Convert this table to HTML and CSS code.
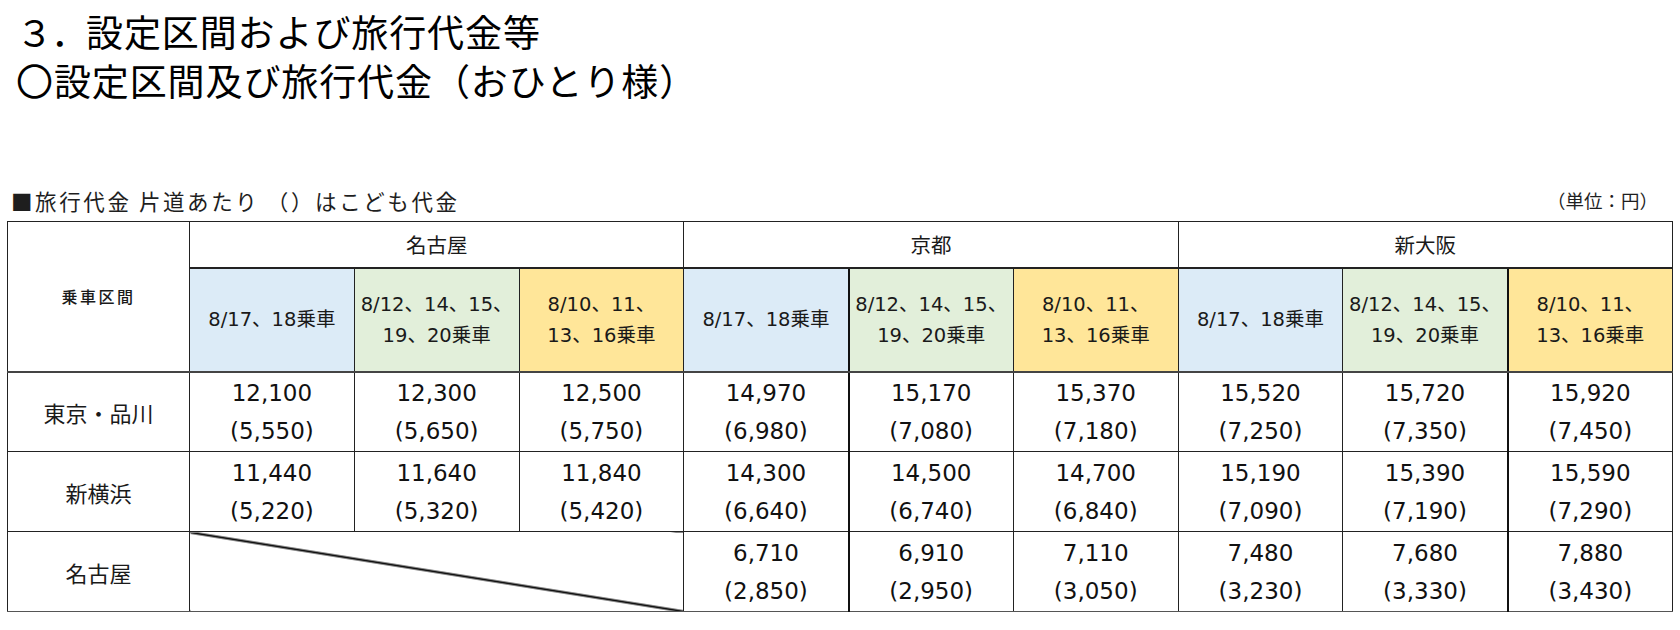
FILE: index.html
```html
<!DOCTYPE html>
<html lang="ja">
<head>
<meta charset="utf-8">
<title>設定区間および旅行代金等</title>
<link rel="stylesheet" href="styles.css">
</head>
<body>
<div class="page">
  <div class="titles">
    <div class="title"><span class="num">３．</span>設定区間および旅行代金等</div>
    <div class="title">〇設定区間及び旅行代金（おひとり様）</div>
  </div>
  <div class="caption">
    <span class="note">■旅行代金 片道あたり （）はこども代金</span>
    <span class="unit">（単位：円）</span>
  </div>
  <table class="fares">
    <colgroup>
      <col class="c-label">
      <col><col><col><col><col><col><col><col><col>
    </colgroup>
    <tr class="h1">
      <th rowspan="2" class="sect">乗車区間</th>
      <th colspan="3">名古屋</th>
      <th colspan="3">京都</th>
      <th colspan="3">新大阪</th>
    </tr>
    <tr class="h2">
      <th class="blue">8/17、18乗車</th>
      <th class="green">8/12、14、15、<br>19、20乗車</th>
      <th class="yellow">8/10、11、<br>13、16乗車</th>
      <th class="blue">8/17、18乗車</th>
      <th class="green tk">8/12、14、15、<br>19、20乗車</th>
      <th class="yellow">8/10、11、<br>13、16乗車</th>
      <th class="blue">8/17、18乗車</th>
      <th class="green">8/12、14、15、<br>19、20乗車</th>
      <th class="yellow tk">8/10、11、<br>13、16乗車</th>
    </tr>
    <tr class="row">
      <th class="st">東京・品川</th>
      <td>12,100<br>(5,550)</td>
      <td>12,300<br>(5,650)</td>
      <td>12,500<br>(5,750)</td>
      <td>14,970<br>(6,980)</td>
      <td class="tk">15,170<br>(7,080)</td>
      <td>15,370<br>(7,180)</td>
      <td>15,520<br>(7,250)</td>
      <td>15,720<br>(7,350)</td>
      <td class="tk">15,920<br>(7,450)</td>
    </tr>
    <tr class="row row2">
      <th class="st">新横浜</th>
      <td>11,440<br>(5,220)</td>
      <td>11,640<br>(5,320)</td>
      <td>11,840<br>(5,420)</td>
      <td>14,300<br>(6,640)</td>
      <td class="tk">14,500<br>(6,740)</td>
      <td>14,700<br>(6,840)</td>
      <td>15,190<br>(7,090)</td>
      <td>15,390<br>(7,190)</td>
      <td class="tk">15,590<br>(7,290)</td>
    </tr>
    <tr class="row last">
      <th class="st">名古屋</th>
      <td colspan="3" class="slash"></td>
      <td>6,710<br>(2,850)</td>
      <td class="tk">6,910<br>(2,950)</td>
      <td>7,110<br>(3,050)</td>
      <td>7,480<br>(3,230)</td>
      <td>7,680<br>(3,330)</td>
      <td class="tk">7,880<br>(3,430)</td>
    </tr>
  </table>
</div>
</body>
</html>
```

FILE: styles.css
```css
html, body {
  margin: 0;
  padding: 0;
  background: #ffffff;
}

.page {
  width: 1680px;
  height: 630px;
  overflow: hidden;
  color: #000;
  font-family: "Noto Sans CJK JP", "Noto Sans", sans-serif;
}

.titles {
  padding: 7px 0 0 16px;
}

.title {
  font-size: 37px;
  line-height: 49px;
  letter-spacing: 0.9px;
  color: #000;
  white-space: nowrap;
}

.title .num {
  letter-spacing: -2px;
}

.caption {
  display: flex;
  justify-content: space-between;
  align-items: center;
  width: 1665px;
  margin: 80px 0 0 7px;
  height: 30px;
  color: #1e1e1e;
}

.note {
  font-size: 21.5px;
  letter-spacing: 2.6px;
  padding-left: 4px;
  white-space: nowrap;
}

.unit {
  font-size: 18.5px;
  padding-right: 14px;
  white-space: nowrap;
}

.fares {
  border-collapse: collapse;
  table-layout: fixed;
  width: 1666px;
  margin: 6px 0 0 7px;
  color: #1a1a1a;
  font-family: "DejaVu Sans", "Noto Sans CJK JP", sans-serif;
  font-weight: normal;
}

.fares col.c-label {
  width: 182px;
}

.fares th,
.fares td {
  border: 1px solid #222;
  padding: 0;
  text-align: center;
  vertical-align: middle;
  font-weight: normal;
  white-space: nowrap;
}

.h1 {
  height: 46px;
}

.h1 th {
  font-family: "Noto Sans CJK JP", sans-serif;
  font-size: 20.5px;
  border-bottom: 2px solid #222;
}

.h1 th.sect {
  font-size: 16px;
  font-weight: 500;
  letter-spacing: 2.5px;
  border-bottom: 2px solid #444;
}

.h2 {
  height: 104px;
}

.h2 th {
  font-size: 19.5px;
  line-height: 31px;
  border-bottom: 2px solid #444;
  overflow: visible;
}

.blue { background: #dcebf7; }
.green { background: #e2efda; }
.yellow { background: #ffe699; }

.fares .tk {
  border-left: 2px solid #111;
}

.row {
  height: 80px;
}

.row td {
  font-size: 23px;
  line-height: 38px;
  color: #111;
}

.row th.st {
  font-family: "Noto Sans CJK JP", sans-serif;
  font-size: 22px;
}

.last th,
.last td {
  border-bottom: 1px solid #555;
}

.slash {
  background: linear-gradient(to top right,
    transparent calc(50% - 1.6px),
    #111 calc(50% - 0.7px),
    #111 calc(50% + 0.7px),
    transparent calc(50% + 1.6px));
}
```
